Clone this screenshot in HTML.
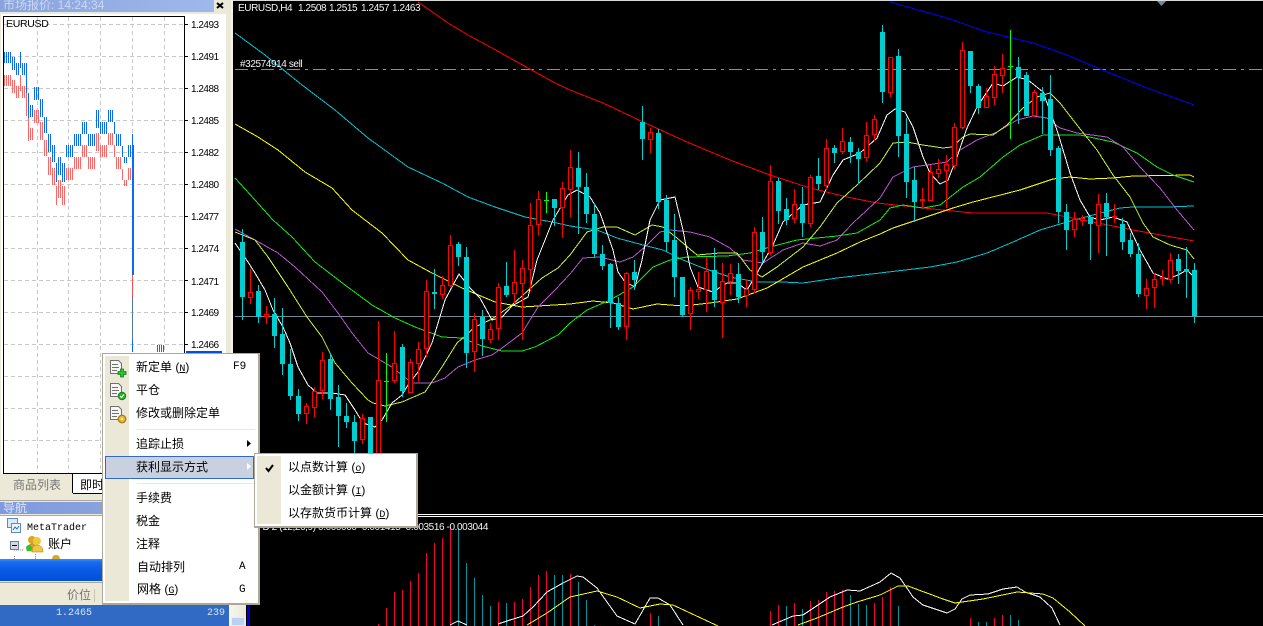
<!DOCTYPE html>
<html><head><meta charset="utf-8"><style>
html,body{margin:0;padding:0;width:1263px;height:626px;overflow:hidden;background:#000}
.a{position:absolute}
#root{position:relative;width:1263px;height:626px;overflow:hidden;background:#000;font-family:"WenQuanYi Zen Hei","Liberation Sans","Noto Sans CJK SC",sans-serif;font-size:12px;line-height:14px;color:#000}
.m{font-family:"Liberation Mono",monospace;font-size:10px}
.k{font-family:"Liberation Mono",monospace;font-size:11px}
.t{position:absolute;white-space:nowrap}
.t u{font-family:"Liberation Mono",monospace;font-size:10px}
svg{position:absolute;display:block;overflow:hidden}
</style></head><body><div id="root">

<!-- main chart -->
<svg class="a" style="left:0;top:0" width="1263" height="626" viewBox="0 0 1263 626">
<rect x="233" y="0" width="1030" height="626" fill="#000"/>
<rect x="233" y="0" width="1030" height="1" fill="#d8d8d8"/>
<path d="M1157 1h9l-4.500 5z" fill="#778899"/>
<g fill="none" stroke-width="1" shape-rendering="crispEdges">
<path d="M235 69.500H1263" stroke="#33cc33" stroke-dasharray="13 5 3 5"/>
<path d="M235 316.500H1263" stroke="#778899"/>
<path d="M235 514.500H1263M235 516.500H1263" stroke="#fff"/>
<polyline stroke="#0000ff" points="890,2 947,18 987,32 1033,43 1067,55 1100,69 1147,88 1194,105"/>
<polyline stroke="#ff0000" points="418,2 448,23 468,35 492,48 528,68 555,83 570,90 603,103 643,122 687,142 730,160 770,175 810,188 847,197 877,203 923,208 973,213 1047,213 1093,222 1133,230 1194,241"/>
<polyline stroke="#00c4d4" points="235,33 265,55 302,85 335,110 368,138 408,167 442,183 468,197 495,207 525,217 552,222 570,226 597,230 617,238 643,245 663,250 683,260 703,268 730,277 757,282 783,282 803,283 837,278 880,273 930,267 957,262 987,253 1013,242 1040,230 1067,222 1093,215 1120,208 1133,207 1167,207 1194,206"/>
<polyline stroke="#ffff00" points="235,124 258,137 278,150 305,172 332,188 352,210 365,220 382,233 408,260 432,273 462,288 495,302 522,307 570,304 593,301 613,303 633,309 657,304 683,306 710,303 737,299 767,288 803,267 837,253 860,242 880,234 893,228 923,218 953,208 973,202 1020,190 1053,179 1070,177 1090,179 1113,178 1133,176 1190,175 1194,177"/>
<polyline stroke="#11ee11" points="235,178 255,200 273,220 292,237 315,262 345,285 372,305 395,318 415,327 442,337 462,338 482,346 502,351 522,351 535,347 558,335 570,323 587,310 610,300 633,287 653,267 670,260 687,257 727,256 750,253 770,247 797,240 837,236 857,233 880,220 890,208 903,205 923,208 940,205 963,187 980,177 1003,157 1020,145 1043,135 1080,135 1113,142 1137,153 1157,167 1173,175 1194,182"/>
<polyline stroke="#ba55d3" points="235,229 255,240 278,253 295,267 322,292 338,313 352,333 368,353 392,367 412,383 432,383 445,378 458,367 475,360 492,355 502,348 522,333 538,307 555,290 570,274 583,258 600,257 620,262 633,257 647,245 660,232 670,230 690,232 710,237 730,248 743,260 763,263 783,250 803,243 820,246 837,240 853,223 880,198 893,177 913,167 947,162 960,150 977,140 997,132 1017,120 1033,116 1047,118 1060,128 1077,133 1107,137 1123,147 1140,167 1160,188 1177,210 1194,230"/>
<polyline stroke="#c4f52e" points="235,232 255,240 268,257 288,287 307,317 322,337 335,363 352,383 368,400 373,403 385,406 402,402 425,392 442,367 457,343 475,327 492,319 512,305 542,278 558,268 570,255 587,232 603,227 617,227 635,235 652,225 663,227 677,238 697,255 720,253 737,253 750,270 762,277 777,267 803,247 820,227 837,203 857,185 880,163 893,143 907,142 923,145 943,148 952,147 963,137 970,134 993,135 1007,125 1023,108 1037,97 1050,93 1060,103 1077,125 1097,150 1113,175 1130,197 1143,223 1153,237 1170,245 1187,250 1194,259"/>
<polyline stroke="#fff" points="235,243 248,262 255,273 265,290 273,310 283,327 290,343 298,367 308,385 317,393 332,393 345,395 355,410 363,423 375,427 382,420 392,403 402,395 408,385 418,372 432,343 445,300 459,274 470,288 480,298 492,320 502,317 512,306 528,297 537,260 553,220 568,195 577,190 590,197 600,213 613,250 618,272 625,282 635,287 642,260 650,220 660,200 675,197 683,230 690,267 698,287 713,292 727,283 737,283 747,290 757,273 773,245 783,222 803,205 820,202 833,175 843,160 860,153 877,138 887,115 895,109 905,112 913,127 923,157 930,173 940,184 948,180 957,157 967,128 977,107 993,83 1003,86 1017,77 1028,80 1043,92 1057,130 1070,173 1080,200 1090,217 1100,220 1113,217 1127,222 1140,250 1153,273 1167,279 1178,275 1187,270 1194,277"/>

<!-- teal candles -->
<path stroke="#00ced1" d="M242.500 229V320M258.500 285V323M274.500 298V348M282.500 308V375M290.500 349V400M298.500 389V421M330.500 354V410M338.500 385V447M346.500 403V428M354.500 415V460M370.500 417V460M402.500 344V397M434.500 269V309M458.500 242V266M466.500 247V368M482.500 310V356M506.500 262V297M554.500 199V226M578.500 152V234M586.500 173V223M594.500 203V257M602.500 245V270M610.500 263V328M618.500 297V330M634.500 260V290M642.500 106V160M658.500 129V209M666.500 195V252M674.500 214V297M682.500 277V317M714.500 248V307M738.500 263V303M762.500 217V263M778.500 178V224M786.500 198V225M802.500 187V237M818.500 158V190M834.500 145V163M850.500 137V163M858.500 148V184M882.500 25V103M898.500 49V157M906.500 118V198M914.500 167V222M970.500 51V93M978.500 84V114M1018.500 57V124M1026.500 72V116M1042.500 87V134M1050.500 75V156M1058.500 146V223M1066.500 204V250M1090.500 215V260M1106.500 193V256M1122.500 218V250M1130.500 233V257M1138.500 243V297M1178.500 254V284M1186.500 247V298M1194.500 263V323"/>
<path stroke="none" fill="#00ced1" d="M240 242h5v55h-5zM256 291h5v26h-5zM272 314h5v22h-5zM280 334h5v30h-5zM288 364h5v32h-5zM296 396h5v18h-5zM328 359h5v40h-5zM336 397h5v19h-5zM344 416h5v6h-5zM352 422h5v19h-5zM368 417h5v43h-5zM400 347h5v44h-5zM432 292h5v2h-5zM456 244h5v13h-5zM464 257h5v96h-5zM480 317h5v22h-5zM504 286h5v9h-5zM552 199h5v9h-5zM576 168h5v19h-5zM584 187h5v27h-5zM592 214h5v40h-5zM600 254h5v12h-5zM608 264h5v39h-5zM616 303h5v24h-5zM632 272h5v8h-5zM640 122h5v17h-5zM656 133h5v69h-5zM664 200h5v42h-5zM672 240h5v37h-5zM680 277h5v38h-5zM712 270h5v30h-5zM736 274h5v23h-5zM760 232h5v20h-5zM776 181h5v30h-5zM784 209h5v11h-5zM800 204h5v19h-5zM816 176h5v8h-5zM832 148h5v5h-5zM848 142h5v10h-5zM856 152h5v7h-5zM880 32h5v60h-5zM896 56h5v80h-5zM904 134h5v48h-5zM912 180h5v22h-5zM968 51h5v35h-5zM976 86h5v22h-5zM1016 67h5v10h-5zM1024 75h5v41h-5zM1040 93h5v8h-5zM1048 99h5v51h-5zM1056 148h5v64h-5zM1064 212h5v18h-5zM1088 217h5v7h-5zM1104 203h5v14h-5zM1120 224h5v18h-5zM1128 240h5v14h-5zM1136 254h5v40h-5zM1176 259h5v12h-5zM1184 269h5v3h-5zM1192 270h5v46h-5z"/>

<!-- red candles -->
<path stroke="#ff0000" d="M250.500 269V304M266.500 306V324M306.500 403V424M314.500 387V417M322.500 352V399M362.500 414V444M378.500 321V460M394.500 331V383M410.500 359V393M418.500 342V382M426.500 280V357M442.500 276V299M450.500 235V287M474.500 313V372M490.500 323V343M498.500 283V340M514.500 250V303M522.500 260V340M530.500 203V291M538.500 191V235M562.500 182V238M570.500 150V217M626.500 272V340M650.500 128V153M690.500 287V330M698.500 272V299M706.500 257V312M722.500 263V338M730.500 264V295M746.500 280V307M754.500 227V293M770.500 165V255M794.500 189V223M810.500 175V227M826.500 139V190M842.500 128V154M866.500 122V161M874.500 115V141M890.500 57V97M922.500 188V208M930.500 165V201M938.500 159V178M946.500 155V208M954.500 123V169M962.500 42V129M986.500 88V108M994.500 66V105M1002.500 54V93M1034.500 90V117M1074.500 212V237M1082.500 215V226M1098.500 194V253M1114.500 204V223M1146.500 279V309M1154.500 273V308M1162.500 270V285M1170.500 253V283"/>
<path stroke="#ff0000" fill="#000" d="M248.500 292.500h4v5h-4zM264.500 314.500h4v2h-4zM304.500 406.500h4v7h-4zM312.500 391.500h4v16h-4zM320.500 360.500h4v30h-4zM360.500 418.500h4v21h-4zM376.500 380.500h4v80h-4zM392.500 363.500h4v17h-4zM408.500 362.500h4v30h-4zM416.500 349.500h4v14h-4zM424.500 291.500h4v57h-4zM440.500 285.500h4v9h-4zM448.500 245.500h4v40h-4zM472.500 319.500h4v32h-4zM488.500 329.500h4v10h-4zM496.500 287.500h4v41h-4zM512.500 282.500h4v11h-4zM520.500 268.500h4v15h-4zM528.500 225.500h4v44h-4zM536.500 199.500h4v25h-4zM560.500 188.500h4v19h-4zM568.500 167.500h4v22h-4zM624.500 273.500h4v53h-4zM648.500 132.500h4v7h-4zM688.500 290.500h4v23h-4zM696.500 289.500h4v2h-4zM704.500 271.500h4v18h-4zM720.500 281.500h4v21h-4zM728.500 273.500h4v8h-4zM744.500 289.500h4v6h-4zM752.500 232.500h4v57h-4zM768.500 181.500h4v71h-4zM792.500 204.500h4v14h-4zM808.500 177.500h4v46h-4zM824.500 148.500h4v37h-4zM840.500 141.500h4v10h-4zM864.500 135.500h4v22h-4zM872.500 119.500h4v15h-4zM888.500 57.500h4v35h-4zM920.500 199.500h4v1h-4zM928.500 172.500h4v28h-4zM936.500 169.500h4v4h-4zM944.500 164.500h4v6h-4zM952.500 127.500h4v38h-4zM960.500 50.500h4v77h-4zM984.500 96.500h4v11h-4zM992.500 74.500h4v23h-4zM1000.500 68.500h4v7h-4zM1032.500 92.500h4v23h-4zM1072.500 219.500h4v10h-4zM1080.500 218.500h4v2h-4zM1096.500 204.500h4v21h-4zM1112.500 216.500h4v1h-4zM1144.500 288.500h4v7h-4zM1152.500 279.500h4v8h-4zM1160.500 277.500h4v1h-4zM1168.500 260.500h4v19h-4z"/>
<!-- green doji -->
<path stroke="#00ff00" d="M386.500 353V422M384 381.500h5M546.500 192V213M544 200.500h5M1010.500 30V139M1008 66.500h5"/>

<!-- sub window histogram -->
<path stroke="#f0003c" d="M378.500 624V626M386.500 608V626M394.500 592V626M402.500 590V626M410.500 581V626M418.500 573V626M426.500 553V626M434.500 543V626M442.500 538V626M450.500 528V626M498.500 602V626M514.500 602V626M522.500 599V626M530.500 587V626M538.500 575V626M546.500 571V626M570.500 574V626M650.500 613V626M770.500 611V626M778.500 605V626M794.500 603V626M810.500 601V626M818.500 600V626M826.500 592V626M834.500 591V626M842.500 590V626M874.500 603V626M882.500 597V626M890.500 587V626M970.500 618V626M994.500 618V626M1002.500 615V626"/>
<path stroke="#00959c" d="M458.500 528V626M466.500 563V626M474.500 578V626M482.500 595V626M490.500 606V626M506.500 603V626M554.500 575V626M562.500 575V626M578.500 582V626M586.500 600V626M594.500 625V626M658.500 616V626M786.500 606V626M802.500 609V626M850.500 595V626M858.500 604V626M866.500 605V626M898.500 606V626M978.500 622V626M986.500 622V626M1010.500 615V626M1018.500 620V626"/>
<polyline stroke="#fff" points="450,625 458,621 467,625"/>
<polyline stroke="#fff" points="498,624 510,620 523,616 533,607 547,592 563,583 577,576 583,577 597,588 617,616 635,624 650,598 658,598 670,605 683,625"/>
<polyline stroke="#fff" points="772,625 793,616 803,615 830,597 847,590 860,591 880,582 891,573 900,578 913,597 923,605 947,613 955,609 962,599 970,595 988,594 1003,589 1017,587 1025,592 1040,597 1052,608 1060,625"/>
<polyline stroke="#ffff00" points="527,625 547,613 570,597 597,591 617,597 640,608 650,606 660,604 673,605 718,626"/>
<polyline stroke="#ffff00" points="798,625 817,618 843,607 857,602 880,595 898,586 908,586 943,599 955,603 983,599 1017,592 1043,594 1053,598 1070,612 1085,626"/>
</g>
<g font-family="'Liberation Sans',sans-serif" font-size="10" fill="#f4f4f4" letter-spacing="-.4">
<text x="238" y="11">EURUSD,H4</text><text x="298" y="11">1.2508</text><text x="329" y="11">1.2515</text><text x="361" y="11">1.2457</text><text x="392" y="11">1.2463</text>
<text x="240" y="67">#32574914 sell</text>
<text x="488" y="530" text-anchor="end">D 2 (12,26,9) 0.000000 -0.001415 -0.003516 -0.003044</text>
</g>
</svg>

<!-- left panels -->
<div class="a" style="left:0;top:0;width:231px;height:626px;background:#ece9d8"></div>
<div class="a" style="left:231px;top:0;width:2px;height:605px;background:#f4f3ea"></div>
<div class="a" style="left:0;top:0;width:214px;height:12px;background:linear-gradient(90deg,#8aa3dc,#9fb8ec);overflow:hidden"><span class="t" style="left:3px;top:-2px;color:#cbd9f2;font-size:12px;letter-spacing:0">市场报价: 14:24:34</span></div>
<svg class="a" style="left:216px;top:2px" width="10" height="8"><path d="M1 1l6 5M7 1L1 6" stroke="#000" stroke-width="2" fill="none"/></svg>
<div class="a" style="left:1px;top:14px;width:225px;height:460px;background:#fff"></div>

<svg class="a" style="left:0;top:0" width="231" height="480" viewBox="0 0 231 480">
<defs><path id="tk" d="M4.500 52V63M6.500 52V63M8.500 52V63M10.500 52V63M12.500 57V70M14.500 57V70M16.500 63V75M18.500 63V75M20.500 52V68M22.500 63V75M24.500 63V75M26.500 63V93M28.500 93V118M30.500 105V117M32.500 105V117M34.500 87V100M36.500 87V100M38.500 87V100M40.500 99V117M42.500 99V117M44.500 117V133M46.500 117V133M48.500 134V152M50.500 134V152M52.500 145V162M54.500 145V162M56.500 163V182M58.500 157V175M60.500 157V175M62.500 163V182M64.500 163V182M66.500 145V157M68.500 145V157M70.500 145V157M72.500 145V157M74.500 134V146M76.500 134V146M78.500 134V146M80.500 134V146M82.500 122V134M84.500 122V134M86.500 122V134M88.500 134V146M90.500 134V146M92.500 134V146M94.500 134V146M96.500 110V128M98.500 110V128M100.500 122V134M102.500 122V134M104.500 122V134M106.500 122V134M108.500 110V122M110.500 110V122M112.500 110V122M114.500 122V134M116.500 134V146M118.500 134V146M120.500 134V146M122.500 146V157M124.500 157V163M126.500 157V163M128.500 145V157M130.500 145V157"/></defs>
<g shape-rendering="crispEdges" fill="none">
<path stroke="#c8c8c8" stroke-dasharray="4 3" d="M37.500 17V473M68.500 17V473M100.500 17V473M132.500 17V473M164.500 17V473M4 24.500H184M4 56.500H184M4 88.500H184M4 120.500H184M4 152.500H184M4 184.500H184M4 216.500H184M4 248.500H184M4 280.500H184M4 312.500H184M4 344.500H184M4 376.500H184M4 408.500H184M4 440.500H184"/>
<path stroke="#000" d="M3.500 16.500H184.500V473.500H3.500Z"/>
<path stroke="#000" d="M184 24.500h4M184 56.500h4M184 88.500h4M184 120.500h4M184 152.500h4M184 184.500h4M184 216.500h4M184 248.500h4M184 280.500h4M184 312.500h4M184 344.500h4"/>
<use href="#tk" stroke="#ff6666" transform="translate(0,23)"/>
<use href="#tk" stroke="#0a6cf2"/>
<path stroke="#0a6cf2" d="M132.500 134V275M133.500 145V275M157.500 345V352M159.500 345V352M161.500 345V352M163.500 345V352"/>
<path stroke="#ff5050" d="M132.500 275V297"/>
<path stroke="#56789a" d="M132.500 297V340"/>
<path stroke="#0a6cf2" d="M132.500 340V352"/>
<path stroke="#0050e0" stroke-width="2" d="M186 352H222"/>
</g>
<g font-family="'Liberation Sans',sans-serif" font-size="10" fill="#000" letter-spacing="-.5">
<text x="6" y="27" font-size="10.500" letter-spacing="-.3">EURUSD</text>
<text x="191" y="28">1.2493</text><text x="191" y="60">1.2491</text><text x="191" y="92">1.2488</text><text x="191" y="124">1.2485</text><text x="191" y="156">1.2482</text><text x="191" y="188">1.2480</text><text x="191" y="220">1.2477</text><text x="191" y="252">1.2474</text><text x="191" y="285">1.2471</text><text x="191" y="316">1.2469</text><text x="191" y="348">1.2466</text>
</g>
</svg>

<!-- tabs -->
<div class="a" style="left:1px;top:474px;width:71px;height:19px;background:#ece9d8;border-right:1px solid #000"></div>
<span class="t" style="left:13px;top:478px;color:#777;font-size:12px">商品列表</span>
<div class="a" style="left:73px;top:474px;width:34px;height:19px;background:#fff;border-bottom:1px solid #000"></div>
<span class="t" style="left:80px;top:478px;color:#000">即时</span>

<!-- navigator -->
<div class="a" style="left:0;top:500px;width:231px;height:1px;background:#aca899"></div>
<div class="a" style="left:0;top:502px;width:110px;height:12px;background:linear-gradient(90deg,#7f9ae0,#8aa3dc);overflow:hidden"><span class="t" style="left:3px;top:-1px;color:#dce6f6;font-size:12px">导航</span></div>
<div class="a" style="left:0;top:515px;width:110px;height:44px;background:#fff;border-top:1px solid #aca899"></div>
<svg class="a" style="left:0;top:516px" width="110" height="44">
<g fill="#dbe8f6" stroke="#5a8ac8"><rect x="7.500" y="2.500" width="10" height="9"/><rect x="11.500" y="7.500" width="9" height="9" fill="#eef4fc"/></g>
<path d="M13 14l2-3 2 2 2-3" stroke="#2a6fc0" fill="none"/>
<path d="M14 34h9M14.500 40v4M35.500 38v6" stroke="#808080" stroke-dasharray="1 1" fill="none"/>
<rect x="10.500" y="25.500" width="8" height="8" fill="#d8d8e0" stroke="#6a7f9a"/><path d="M12 29.500h5" stroke="#000"/>
<circle cx="32" cy="24" r="4" fill="#d8a820"/><path d="M27 35c0-6 3-7 5-7s5 1 5 7z" fill="#d8a820" stroke="#a07010" stroke-width=".5"/>
<circle cx="37" cy="25" r="4" fill="#f0c840"/><path d="M32 36c0-6 3-7 5-7s6 1 6 7z" fill="#f0c840" stroke="#a07010" stroke-width=".5"/>
<circle cx="29" cy="32" r="3" fill="#30c030"/>
<path d="M52 44c0-4 2-5 4-5s4 1 4 5z" fill="#d8a820"/>
</svg>
<span class="t m" style="left:27px;top:522px">MetaTrader</span>
<span class="t" style="left:48px;top:537px">账户</span>
<div class="a" style="left:0;top:559px;width:110px;height:22px;background:linear-gradient(180deg,#3a8cf0 0,#1a6cf0 3px,#0a5ce6 10px,#0050d8 100%)"></div>
<div class="a" style="left:0;top:582px;width:110px;height:1px;background:#aca899"></div>
<span class="t" style="left:67px;top:588px;color:#777">价位</span>
<div class="a" style="left:94px;top:589px;width:1px;height:13px;background:#c8c4b0"></div>
<div class="a" style="left:0;top:605px;width:229px;height:21px;background:#316ac5"></div>
<span class="t m" style="left:56px;top:607px;color:#d8e4f4">1.2465</span>
<span class="t m" style="left:207px;top:607px;color:#d8e4f4">239</span>
<div class="a" style="left:229px;top:600px;width:17px;height:26px;background:linear-gradient(90deg,#f6f6f2,#ece9d8)"></div>
<div class="a" style="left:231px;top:617px;width:14px;height:9px;background:#bcd0f4;border:1px solid #e4ecfa;box-sizing:border-box"></div>
<div class="a" style="left:247px;top:600px;width:3px;height:26px;background:#0000cc"></div>

<!-- context menu -->
<div class="a" style="left:102px;top:353px;width:155px;height:249px;background:#fff;border:2px solid #aca899;border-width:1px 2px 2px 1px"></div>
<div class="a" style="left:105px;top:356px;width:24px;height:245px;background:#ebe8d8"></div>
<div class="a" style="left:137px;top:429px;width:118px;height:1px;background:#ebe8d8"></div>
<div class="a" style="left:137px;top:483px;width:118px;height:1px;background:#ebe8d8"></div>
<div class="a" style="left:105px;top:456px;width:149px;height:23px;box-sizing:border-box;background:#c9d1e0;border:1px solid #316ac5"></div>

<svg class="a" style="left:108px;top:358px" width="20" height="68">
<g fill="#f6f6f6" stroke="#707070"><path d="M2.500 2.500h8l3 3v10h-11z"/><path d="M2.500 25.500h8l3 3v10h-11z"/><path d="M2.500 48.500h8l3 3v10h-11z"/></g>
<g stroke="#707070" fill="none"><path d="M4 6.500h6M4 9.500h7M4 12.500h5M4 29.500h6M4 32.500h7M4 35.500h5M4 52.500h6M4 55.500h7M4 58.500h5"/></g>
<path d="M10 13.500h2.500V11h3v2.500H18v3h-2.500V19h-3v-2.500H10z" fill="#30c030" stroke="#108010" stroke-width=".8"/>
<circle cx="14" cy="38" r="3.800" fill="#20b020" stroke="#108010" stroke-width=".8"/><path d="M12 38l1.500 1.500 2.500-3" stroke="#fff" fill="none" stroke-width="1.200"/>
<circle cx="14" cy="61" r="3.800" fill="#e8b830" stroke="#a07818" stroke-width="1.200"/><circle cx="14" cy="61" r="1.200" fill="#fff2b0"/>
</svg>
<span class="t" style="left:136px;top:360px">新定单 (<u>N</u>)</span><span class="t k" style="left:233px;top:360px">F9</span>
<span class="t" style="left:136px;top:383px">平仓</span>
<span class="t" style="left:136px;top:406px">修改或删除定单</span>
<span class="t" style="left:136px;top:437px">追踪止损</span>
<svg class="a" style="left:247px;top:440px" width="5" height="7"><path d="M0 0l4 3.500L0 7z" fill="#000"/></svg>
<span class="t" style="left:136px;top:460px">获利显示方式</span>
<svg class="a" style="left:247px;top:463px" width="5" height="7"><path d="M0 0l4 3.500L0 7z" fill="#fff"/></svg>
<span class="t" style="left:136px;top:491px">手续费</span>
<span class="t" style="left:136px;top:514px">税金</span>
<span class="t" style="left:136px;top:537px">注释</span>
<span class="t" style="left:137px;top:560px">自动排列</span><span class="t k" style="left:239px;top:560px">A</span>
<span class="t" style="left:137px;top:582px">网格 (<u>G</u>)</span><span class="t k" style="left:239px;top:583px">G</span>

<!-- submenu -->
<div class="a" style="left:254px;top:453px;width:161px;height:72px;background:#fff;border:1px solid #aca899;border-width:1px 2px 2px 1px"></div>
<div class="a" style="left:257px;top:456px;width:24px;height:68px;background:#ebe8d8"></div>
<svg class="a" style="left:265px;top:464px" width="10" height="9"><path d="M1 4l2.500 3L8 1" stroke="#000" stroke-width="2" fill="none"/></svg>
<span class="t" style="left:288px;top:460px">以点数计算 (<u>o</u>)</span>
<span class="t" style="left:288px;top:483px">以金额计算 (<u>I</u>)</span>
<span class="t" style="left:288px;top:506px">以存款货币计算 (<u>D</u>)</span>

</div></body></html>
